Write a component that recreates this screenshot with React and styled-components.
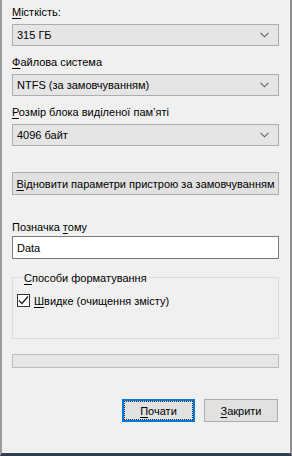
import React, { useState } from "react";
import styled, { createGlobalStyle } from "styled-components";

const GlobalStyle = createGlobalStyle`
  html, body {
    margin: 0;
    padding: 0;
    background: #f0f0f0;
  }
  body {
    font-family: "Liberation Sans", Arial, sans-serif;
    font-size: 11px;
    color: #000;
  }
`;

const Chevron = () => (
  <svg width="9" height="6" viewBox="0 0 9 6">
    <path d="M0.5 0.8 L4.5 4.8 L8.5 0.8" fill="none" stroke="#606060" strokeWidth="1.1" />
  </svg>
);

const Check = () => (
  <svg width="11" height="11" viewBox="0 0 11 11">
    <path d="M1 5.5 L4 8.5 L10 1.5" fill="none" stroke="#202020" strokeWidth="1.3" />
  </svg>
);

const Dialog = () => {
  const [quick, setQuick] = useState(true);
  const [label, setLabel] = useState("Data");

  return (
    <StyledWindow>
      <Body>
        <Label gap="5px">
          <u>М</u>істкість:
        </Label>
        <Select>
          <span>315 ГБ</span>
          <Chevron />
        </Select>

        <Label gap="9px">
          <u>Ф</u>айлова система
        </Label>
        <Select>
          <span>NTFS (за замовчуванням)</span>
          <Chevron />
        </Select>

        <Label gap="9px">
          <u>Р</u>озмір блока виділеної пам’яті
        </Label>
        <Select>
          <span>4096 байт</span>
          <Chevron />
        </Select>

        <WideButton>
          <u>В</u>ідновити параметри пристрою за замовчуванням
        </WideButton>

        <Label gap="25px" tight>
          Позначка <u>т</u>ому
        </Label>
        <TextInput value={label} onChange={(e) => setLabel(e.target.value)} />

        <Group>
          <legend>
            <u>С</u>пособи форматування
          </legend>
          <CheckRow onClick={() => setQuick(!quick)}>
            <CheckBox>{quick && <Check />}</CheckBox>
            <span>
              <u>Ш</u>видке (очищення змісту)
            </span>
          </CheckRow>
        </Group>

        <Progress />

        <Actions>
          <Button focused>
            <span>
              <u>П</u>очати
            </span>
          </Button>
          <Button>
            <span>
              <u>З</u>акрити
            </span>
          </Button>
        </Actions>
      </Body>
    </StyledWindow>
  );
};

const StyledWindow = styled.div`
  width: 292px;
  height: 456px;
  box-sizing: border-box;
  border-left: 2px solid #9c9c9c;
  border-right: 2px solid #8e8e8e;
  border-bottom: 3px solid #2f3d4e;
  background: #f0f0f0;
  display: flex;
  flex-direction: column;

  u {
    text-decoration: underline;
    text-underline-offset: 2px;
  }
`;

const Body = styled.div`
  flex: 1;
  display: flex;
  flex-direction: column;
  padding: 0 11px 0 10px;
  border-bottom: 1px solid #fbfbfb;

  & > * {
    flex-shrink: 0;
  }
`;

const Label = styled.div`
  height: 14px;
  line-height: 14px;
  margin-top: ${(p) => p.gap};
  margin-bottom: ${(p) => (p.tight ? "2px" : "5px")};
  white-space: nowrap;
`;

const Select = styled.div`
  height: 22px;
  box-sizing: border-box;
  border: 1px solid #adadad;
  background: #e5e5e5;
  display: flex;
  align-items: center;
  justify-content: space-between;
  padding: 0 9px 0 4px;
  span {
    line-height: 20px;
  }
`;

const WideButton = styled.div`
  margin-top: 26px;
  height: 23px;
  box-sizing: border-box;
  border: 1px solid #adadad;
  background: #e1e1e1;
  display: flex;
  align-items: center;
  justify-content: center;
  white-space: nowrap;
`;

const TextInput = styled.input`
  height: 23px;
  box-sizing: border-box;
  border: 1px solid #7a7a7a;
  background: #fff;
  font: inherit;
  padding: 0 4px;
  outline: none;
`;

const Group = styled.fieldset`
  margin: 11px 0 0 0;
  padding: 9px 0 0 4px;
  height: 69px;
  box-sizing: border-box;
  border: 1px solid #dcdcdc;
  legend {
    padding: 0 1px;
    margin-left: 6px;
    line-height: 14px;
    position: relative;
    top: 1px;
  }
`;

const CheckRow = styled.div`
  display: flex;
  align-items: center;
  gap: 4px;
  height: 15px;
  cursor: default;
`;

const CheckBox = styled.div`
  width: 13px;
  height: 13px;
  box-sizing: border-box;
  border: 1px solid #333;
  background: #fff;
  display: flex;
  align-items: center;
  justify-content: center;
`;

const Progress = styled.div`
  margin-top: 15px;
  height: 14px;
  box-sizing: border-box;
  border: 1px solid #bcbcbc;
  background: #e6e6e6;
`;

const Actions = styled.div`
  margin-top: 31px;
  display: flex;
  justify-content: flex-end;
  gap: 9px;
  padding-right: 1px;
`;

const Button = styled.div`
  width: ${(p) => (p.focused ? "73px" : "74px")};
  height: 23px;
  box-sizing: border-box;
  border: ${(p) => (p.focused ? "2px solid #0078d7" : "1px solid #adadad")};
  background: #e1e1e1;
  display: flex;
  align-items: center;
  justify-content: center;
  padding: ${(p) => (p.focused ? "1px" : "2px")};

  span {
    flex: 1;
    align-self: stretch;
    display: flex;
    align-items: center;
    justify-content: center;
    outline: ${(p) => (p.focused ? "1px dotted #202020" : "none")};
  }
`;

export default function App() {
  return (
    <>
      <GlobalStyle />
      <Dialog />
    </>
  );
}
